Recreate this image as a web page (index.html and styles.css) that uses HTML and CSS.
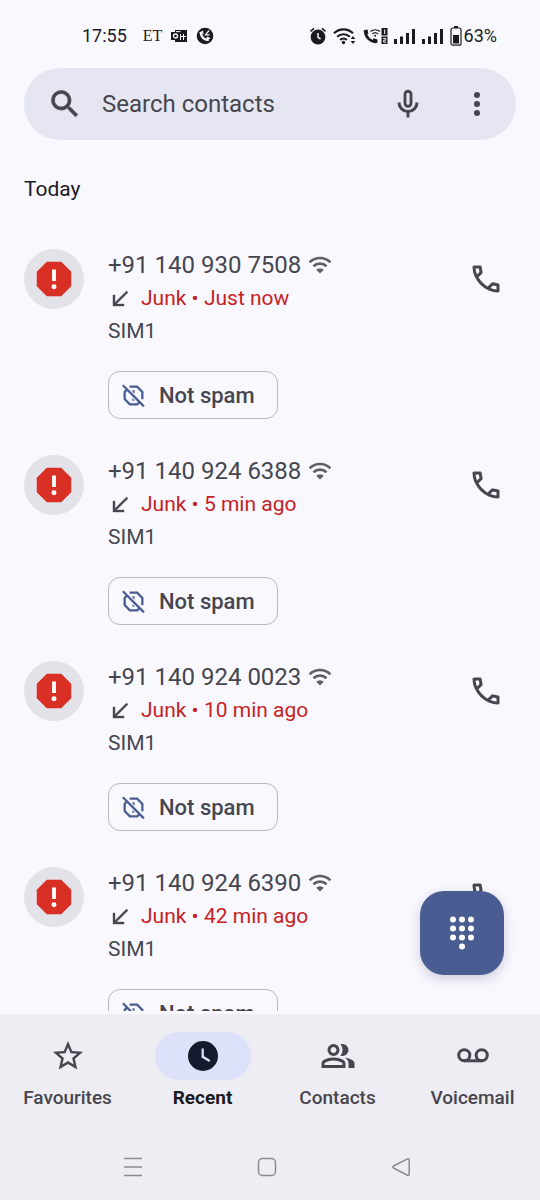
FILE: index.html
```html
<!DOCTYPE html>
<html lang="en">
<head>
<meta charset="utf-8">
<meta name="viewport" content="width=device-width, initial-scale=1">
<title>Phone</title>
<link rel="stylesheet" href="styles.css">
</head>
<body>
<svg class="sprite" aria-hidden="true">
  <symbol id="wifi" viewBox="0 0 24 24"><path fill="none" stroke="currentColor" stroke-width="2.6" d="M1.600 8.300a14.800 14.800 0 0 1 20.800 0M5.500 12.300a9.300 9.300 0 0 1 13 0"/><path d="M8.200 15.700a5.500 5.500 0 0 1 7.600 0L12 19.400z"/></symbol>
  <symbol id="call" viewBox="0 0 24 24"><path d="M19.95 21q-3.125 0-6.175-1.362t-5.55-3.863-3.862-5.55T3 4.05q0-.45.3-.75t.75-.3H8.1q.35 0 .625.238t.325.562l.65 3.5q.05.4-.025.675T9.4 8.45L6.975 10.9q.5.925 1.187 1.787t1.513 1.663q.775.775 1.625 1.438T13.1 17l2.35-2.35q.225-.225.588-.338t.712-.062l3.45.7q.35.1.575.363T21 15.9v4.05q0 .45-.3.75t-.75.3M6.025 9l1.65-1.65L7.25 5H5.025q.125 1.025.35 2.025T6.025 9m8.95 8.95q.975.425 1.988.675T19 18.95v-2.2l-2.35-.475z"/></symbol>
  <symbol id="report" viewBox="0 0 24 24"><path fill-rule="evenodd" d="M8.25 3 3 8.25v7.5L8.25 21h7.5L21 15.75v-7.5L15.75 3zM11 7h2v6h-2zM12 17.3a1.3 1.3 0 1 1 0-2.6 1.3 1.3 0 0 1 0 2.6z"/></symbol>
  <symbol id="received" viewBox="0 0 24 24"><path stroke="currentColor" stroke-width=".4" d="M20 5.410 18.590 4 7 15.590V8H5v11h11v-2H8.410z"/></symbol>
  <symbol id="not-spam" viewBox="0 0 24 24"><path fill="none" stroke="currentColor" stroke-width="2.200" d="M1.800 2.200 22 22.400M8.300 3.500H15.500L20.500 8.500V15.700M17.800 18.400 15.500 20.500H8.500L3.500 15.500V8.500L5.500 6.500"/><path d="M11 7h2v3.200l-2-1.800zM11 14.500l2 2v.6h-2z"/></symbol>
</svg>

<header class="status">
  <div class="status-group">
    <time class="clock">17:55</time>
    <span class="et">ET</span>
    <svg width="16" height="14" viewBox="0 0 16 14"><path d="M4 1h12v12H4zM0 3h9v8H0z"/><circle cx="4.5" cy="7" r="2" fill="none" stroke="#f9f8ff" stroke-width="1.3"/><path stroke="#f9f8ff" stroke-width="1" d="M9.5 5v6M12.500 5v6M9 7.500h6M5 2.600h4.500"/></svg>
    <svg width="18" height="18" viewBox="0 0 18 18"><circle cx="9" cy="9" r="8.3"/><path fill="none" stroke="#f9f8ff" stroke-width="2.200" d="M4.500 5.200C5 9.800 8 12.800 12.800 13.200"/><path fill="none" stroke="#f9f8ff" stroke-width="1.200" d="M4 6 6.500 4.500 7 7.500M10.500 13l1-2.700 2.500 1.200M13 3.500 9.500 7.800h4"/></svg>
  </div>
  <div class="status-group status-right">
    <svg width="18" height="18" viewBox="0 0 18 18"><circle cx="9" cy="10" r="7.4"/><path fill="none" stroke="#1b1b1f" stroke-width="1.6" d="M1.5 4.3 5 1.4M16.5 4.3 13 1.4"/><path fill="none" stroke="#f9f8ff" stroke-width="1.5" d="M9 6v4.4l2.6 1.6"/></svg>
    <svg width="24" height="18" viewBox="0 0 24 18"><path fill="none" stroke="#1b1b1f" stroke-width="2.200" d="M1 6.300a13.500 13.500 0 0 1 19 0M4.200 9.800a9 9 0 0 1 12.600 0M7.200 13a4.700 4.700 0 0 1 6.600 0"/><circle cx="10.5" cy="15.5" r="1.7"/><path d="m20 9 2.300 3h-4.600zM20 17l2.300-3h-4.600z"/></svg>
    <svg width="25" height="18" viewBox="0 0 25 18"><path fill="none" stroke="#1b1b1f" stroke-width="2.600" d="M2 3.500C2.200 10 7 14.800 13.500 15"/><path d="M.7 3.200 4.500 2.600 5.400 6.800 2.500 8.400zM9 14.200l1.600-2.900 3.900 1.200v3.600z"/><path fill="none" stroke="#1b1b1f" stroke-width="1.300" d="M7.500 4.500a7.500 7.500 0 0 1 9.500 0M9.400 7a4.200 4.200 0 0 1 5.700 0"/><circle cx="12.200" cy="8.800" r="1"/><path d="M18.500 1h6v7.500h-6zM18.500 9.500h6V17h-6z"/><path fill="none" stroke="#f9f8ff" stroke-width="1" d="M21.700 2.500v4.500M20.200 11.500h2.500v1.700h-2v2h2.500"/></svg>
    <svg width="22" height="16" viewBox="0 0 22 16"><path d="M0 11h3v5H0zM6 8.500h3V16H6zM12 5h3v11h-3zM18 1h3v15h-3z"/></svg>
    <svg width="22" height="16" viewBox="0 0 22 16"><path d="M0 11h3v5H0zM6 8.500h3V16H6zM12 5h3v11h-3zM18 1h3v15h-3z"/></svg>
    <svg width="12" height="20" viewBox="0 0 12 20"><path d="M4 0h4v2H4zM3 9h6v8.500H3z"/><rect x="1" y="2" width="10" height="17.200" rx="2" fill="none" stroke="#1b1b1f" stroke-width="1.200"/></svg>
    <span class="battery">63%</span>
  </div>
</header>

<form class="search" role="search">
  <svg class="icon" viewBox="0 0 24 24"><path stroke="currentColor" stroke-width=".5" d="M15.500 14h-.79l-.28-.27A6.471 6.471 0 0 0 16 9.500 6.500 6.500 0 1 0 9.500 16c1.610 0 3.090-.59 4.230-1.570l.27.28v.79l5 4.990L20.490 19zm-6 0C7.010 14 5 11.990 5 9.500S7.010 5 9.500 5 14 7.010 14 9.500 11.990 14 9.500 14"/></svg>
  <input class="search-input" type="text" placeholder="Search contacts" aria-label="Search contacts">
  <button class="icon-button mic" type="button" aria-label="Voice search"><svg class="icon" viewBox="0 0 24 24"><rect x="10" y="3.500" width="4" height="10" rx="2" fill="none" stroke="currentColor" stroke-width="1.900"/><path fill="none" stroke="currentColor" stroke-width="2" d="M6 11a6 6 0 0 0 12 0M12 17v4"/></svg></button>
  <button class="icon-button" type="button" aria-label="More options"><svg class="icon" viewBox="0 0 24 24"><circle cx="12" cy="6" r="2"/><circle cx="12" cy="12" r="2"/><circle cx="12" cy="18" r="2"/></svg></button>
</form>

<main class="content">
  <div class="list">
    <h1 class="day">Today</h1>
    <article class="entry">
      <div class="avatar"><svg><use href="#report"/></svg></div>
      <div class="details">
        <div class="number">+91 140 930 7508 <svg class="wifi"><use href="#wifi"/></svg></div>
        <div class="meta"><svg><use href="#received"/></svg>Junk • Just now</div>
        <div class="sim">SIM1</div>
        <button class="chip" type="button"><svg><use href="#not-spam"/></svg>Not spam</button>
      </div>
      <button class="icon-button call" type="button" aria-label="Call"><svg class="icon"><use href="#call"/></svg></button>
    </article>
    <article class="entry">
      <div class="avatar"><svg><use href="#report"/></svg></div>
      <div class="details">
        <div class="number">+91 140 924 6388 <svg class="wifi"><use href="#wifi"/></svg></div>
        <div class="meta"><svg><use href="#received"/></svg>Junk • 5 min ago</div>
        <div class="sim">SIM1</div>
        <button class="chip" type="button"><svg><use href="#not-spam"/></svg>Not spam</button>
      </div>
      <button class="icon-button call" type="button" aria-label="Call"><svg class="icon"><use href="#call"/></svg></button>
    </article>
    <article class="entry">
      <div class="avatar"><svg><use href="#report"/></svg></div>
      <div class="details">
        <div class="number">+91 140 924 0023 <svg class="wifi"><use href="#wifi"/></svg></div>
        <div class="meta"><svg><use href="#received"/></svg>Junk • 10 min ago</div>
        <div class="sim">SIM1</div>
        <button class="chip" type="button"><svg><use href="#not-spam"/></svg>Not spam</button>
      </div>
      <button class="icon-button call" type="button" aria-label="Call"><svg class="icon"><use href="#call"/></svg></button>
    </article>
    <article class="entry">
      <div class="avatar"><svg><use href="#report"/></svg></div>
      <div class="details">
        <div class="number">+91 140 924 6390 <svg class="wifi"><use href="#wifi"/></svg></div>
        <div class="meta"><svg><use href="#received"/></svg>Junk • 42 min ago</div>
        <div class="sim">SIM1</div>
        <button class="chip" type="button"><svg><use href="#not-spam"/></svg>Not spam</button>
      </div>
      <button class="icon-button call" type="button" aria-label="Call"><svg class="icon"><use href="#call"/></svg></button>
    </article>
  </div>
  <button class="fab" type="button" aria-label="Dial pad"><svg class="icon" viewBox="0 0 24 24"><circle cx="6" cy="3" r="2"/><circle cx="12" cy="3" r="2"/><circle cx="18" cy="3" r="2"/><circle cx="6" cy="9" r="2"/><circle cx="12" cy="9" r="2"/><circle cx="18" cy="9" r="2"/><circle cx="6" cy="15" r="2"/><circle cx="12" cy="15" r="2"/><circle cx="18" cy="15" r="2"/><circle cx="12" cy="21" r="2"/></svg></button>
</main>

<footer class="bottom">
  <nav class="tabs">
    <a class="tab" href="#favourites"><span class="pill"><svg viewBox="0 0 24 24"><path d="m22 9.240-7.190-.62L12 2 9.190 8.630 2 9.240l5.460 4.730L5.820 21 12 17.270 18.180 21l-1.630-7.030zM12 15.400l-3.760 2.270 1-4.280-3.320-2.880 4.380-.38L12 6.100l1.710 4.040 4.380.38-3.320 2.880 1 4.280z"/></svg></span>Favourites</a>
    <a class="tab active" href="#recent" aria-current="page"><span class="pill"><svg viewBox="0 0 24 24"><circle cx="12" cy="12" r="10"/><path fill="none" stroke="#dde1f9" stroke-width="1.500" d="M11.800 7v5.500l4.700 2.800"/></svg></span>Recent</a>
    <a class="tab" href="#contacts"><span class="pill"><svg viewBox="0 0 24 24"><path d="M1 20v-2.800q0-.85.438-1.562T2.600 14.550q1.550-.775 3.150-1.162T9 13t3.250.388 3.150 1.162q.725.375 1.163 1.088T17 17.200V20zm18 0v-3q0-1.100-.613-2.113T16.650 13.150q1.275.15 2.400.513t2.100.887q.9.500 1.375 1.113T23 17v3zM9 12q-1.650 0-2.825-1.175T5 8t1.175-2.825T9 4t2.825 1.175T13 8t-1.175 2.825T9 12m10-4q0 1.650-1.175 2.825T15 12q-.275 0-.7-.062t-.7-.138q.675-.8 1.038-1.775T15 8t-.362-2.025T13.600 4.200q.35-.125.700-.163T15 4q1.650 0 2.825 1.175T19 8M3 18h12v-.8q0-.275-.137-.5t-.363-.35q-1.350-.675-2.725-1.012T9 15t-2.775.338T3.500 16.350q-.225.125-.363.350T3 17.200zm6-8q.825 0 1.413-.587T11 8t-.587-1.412T9 6t-1.412.588T7 8t.588 1.413T9 10"/></svg></span>Contacts</a>
    <a class="tab" href="#voicemail"><span class="pill"><svg viewBox="0 0 24 24"><g fill="none" stroke="currentColor" stroke-width="2"><circle cx="6.200" cy="11.500" r="3.700"/><circle cx="17.800" cy="11.500" r="3.700"/><path d="M6 15.200h12"/></g></svg></span>Voicemail</a>
  </nav>
  <div class="system">
    <button class="system-button" type="button" aria-label="Menu"><svg viewBox="0 0 20 20"><path d="M1 1.500h18M1 10h18M1 18.500h18"/></svg></button>
    <button class="system-button" type="button" aria-label="Home"><svg viewBox="0 0 20 20"><rect x="1.500" y="1.500" width="17" height="17" rx="4"/></svg></button>
    <button class="system-button" type="button" aria-label="Back"><svg viewBox="0 0 20 20"><path d="M16.500 1.800 2.500 9q-1.500 1 0 2l14 7.200q1.700.6 1.700-1.200V3q0-1.800-1.700-1.200z"/></svg></button>
  </div>
</footer>
</body>
</html>
```
FILE: styles.css
```css
* { box-sizing: border-box; }

body {
  margin: 0;
  height: 100vh;
  display: flex;
  flex-direction: column;
  background: #f9f8ff;
  color: #1b1b1f;
  font-family: Roboto, "Liberation Sans", sans-serif;
}

svg { fill: currentColor; flex: none; display: block; }
button { font: inherit; border: 0; background: none; padding: 0; color: inherit; }

.sprite { position: absolute; width: 0; height: 0; }
.icon { width: 36px; height: 36px; }
.icon-button { color: #46464f; }

.status {
  display: flex;
  justify-content: space-between;
  padding: 24px 43px 20px 82px;
}
.status-group { display: flex; align-items: center; gap: 9px; height: 24px; }
.status-right { gap: 6px; }
.clock, .battery { font-size: 18px; line-height: 24px; }
.clock { margin-right: 7px; }
.battery { margin-left: -4px; }
.et { font-family: "Liberation Serif", serif; font-size: 16px; }

.search {
  display: flex;
  align-items: center;
  height: 72px;
  margin: 0 24px;
  padding: 0 21px 0 23px;
  border-radius: 36px;
  background: #e6e6f2;
  color: #46464f;
  flex: none;
}
.search-input {
  flex: 1;
  min-width: 0;
  margin-left: 19px;
  padding: 0;
  border: 0;
  outline: 0;
  background: none;
  font: 24px/32px Roboto, "Liberation Sans", sans-serif;
  color: inherit;
}
.search-input::placeholder { color: inherit; opacity: 1; }
.mic { margin-right: 33px; }

.content {
  position: relative;
  flex: 1;
  min-height: 0;
  padding-bottom: 3px;
}
.list { height: 100%; overflow: hidden; padding: 33px 24px 0; }
.day { margin: 0 0 44px; font-size: 21px; line-height: 32px; font-weight: 400; }

.entry {
  display: flex;
  align-items: flex-start;
  padding-bottom: 36px;
  color: #46464f;
}
.avatar {
  display: grid;
  place-items: center;
  width: 60px;
  height: 60px;
  border-radius: 50%;
  background: #e3e2e9;
  color: #d93025;
}
.avatar svg { width: 46px; height: 46px; background: radial-gradient(#fff 40%, transparent 41%); }
.details { flex: 1; margin-left: 24px; }
.number, .meta { display: flex; align-items: center; }
.number { gap: 7px; font-size: 24px; line-height: 33px; }
.wifi { width: 24px; height: 24px; color: #5f5f66; }
.meta { gap: 9px; font-size: 21px; line-height: 33px; color: #c5221f; }
.meta svg { width: 24px; height: 24px; color: #46464f; }
.sim { font-size: 21px; line-height: 33px; }
.chip {
  display: flex;
  align-items: center;
  gap: 13px;
  height: 48px;
  margin-top: 23px;
  padding: 0 22px 0 12px;
  border: 1px solid #b9b8c2;
  border-radius: 12px;
  font-size: 22px;
  font-weight: 500;
}
.chip svg { width: 25px; height: 25px; color: #495d92; }
.call { margin: 12px 12px 0 0; }

.fab {
  position: absolute;
  right: 36px;
  bottom: 39px;
  display: grid;
  place-items: center;
  width: 84px;
  height: 84px;
  border-radius: 24px;
  background: #495d92;
  color: #fff;
  box-shadow: 0 4px 12px rgba(40, 40, 70, 0.2);
}

.bottom { flex: none; background: #eeedf3; }
.tabs {
  display: grid;
  grid-template-columns: repeat(4, 1fr);
  padding-top: 18px;
}
.tab {
  display: flex;
  flex-direction: column;
  align-items: center;
  gap: 6px;
  color: #46464f;
  font-size: 19px;
  line-height: 24px;
  font-weight: 500;
  text-decoration: none;
}
.pill {
  display: grid;
  place-items: center;
  width: 96px;
  height: 48px;
  border-radius: 24px;
}
.pill svg { width: 36px; height: 36px; }
.active { color: #1b1b1f; font-weight: 700; }
.active .pill { background: #dde1f9; color: #151b2c; }

.system {
  display: grid;
  grid-template-columns: repeat(3, 1fr);
  padding: 47px 72px 23px 66px;
}
.system-button { display: grid; place-items: center; color: #8c8b92; }
.system-button svg { width: 20px; height: 20px; fill: none; stroke: currentColor; stroke-width: 1.5; }
```
